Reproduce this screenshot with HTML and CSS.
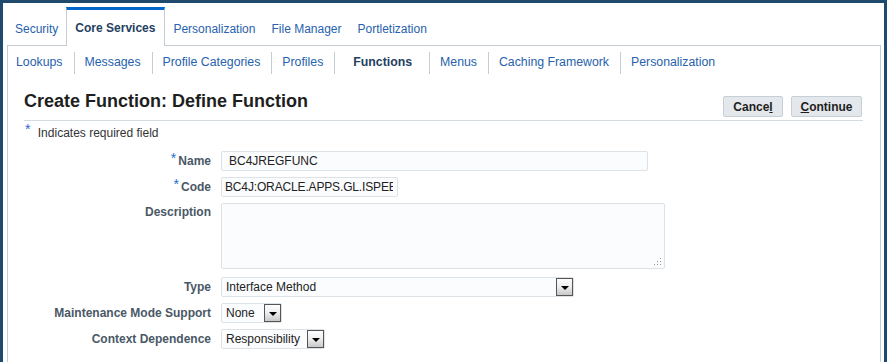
FILE: index.html
```html
<!DOCTYPE html>
<html lang="en">
<head>
  <meta charset="UTF-8" />
  <title>Create Function: Define Function</title>
  <link rel="stylesheet" href="styles.css">
</head>
<body>
  <div class="page">

    <nav class="tabs">
      <a class="tab" href="#">Security</a>
      <a class="tab active" href="#">Core Services</a>
      <a class="tab" href="#">Personalization</a>
      <a class="tab" href="#">File Manager</a>
      <a class="tab" href="#">Portletization</a>
    </nav>

    <div class="panel">
      <nav class="subtabs">
        <a class="subtab" href="#">Lookups</a>
        <a class="subtab" href="#">Messages</a>
        <a class="subtab" href="#">Profile Categories</a>
        <a class="subtab" href="#">Profiles</a>
        <a class="subtab current" href="#">Functions</a>
        <a class="subtab" href="#">Menus</a>
        <a class="subtab" href="#">Caching Framework</a>
        <a class="subtab" href="#">Personalization</a>
      </nav>

      <div class="content">
        <div class="title-row">
          <h1>Create Function: Define Function</h1>
          <div class="actions">
            <button class="btn cancel">Cance<u>l</u></button>
            <button class="btn continue"><u>C</u>ontinue</button>
          </div>
        </div>

        <p class="required-note"><span class="req">*</span> Indicates required field</p>

        <div class="form">
          <label class="label"><span class="req">*</span>Name</label>
          <div class="field"><input class="input name-input" type="text" value="BC4JREGFUNC"></div>

          <label class="label"><span class="req">*</span>Code</label>
          <div class="field"><input class="input code-input" type="text" value="BC4J:ORACLE.APPS.GL.ISPEED"></div>

          <label class="label top">Description</label>
          <div class="field"><div class="textarea"><span class="grip"></span></div></div>

          <label class="label gap-top">Type</label>
          <div class="field gap-top"><div class="select type-select"><span class="value">Interface Method</span><span class="drop"></span></div></div>

          <label class="label">Maintenance Mode Support</label>
          <div class="field"><div class="select mode-select"><span class="value">None</span><span class="drop"></span></div></div>

          <label class="label">Context Dependence</label>
          <div class="field"><div class="select context-select"><span class="value">Responsibility</span><span class="drop"></span></div></div>
        </div>
      </div>
    </div>

  </div>
</body>
</html>
```

FILE: styles.css
```css
* {
  margin: 0; padding: 0; box-sizing: border-box;
}
html, body {
  height: 100%;
  font-family: Arial, 'Liberation Sans', sans-serif;
  background: #1f4a6e;
}
body {
  padding: 3px 3px 0 3px;
}

.page {
  background: #fff;
  min-height: 100%;
  display: flex;
  flex-direction: column;
}

.tabs {
  display: flex;
  align-items: flex-end;
  height: 42px;
  padding-left: 4px;
  position: relative;
  z-index: 1;
}

.tab {
  font-size: 12px;
  color: #2762ad;
  text-decoration: none;
  padding: 0 8px;
  height: 38px;
  line-height: 37px;
  border-top: 3px solid transparent;
  margin-bottom: -1px;
}

.tab.active {
  font-weight: bold;
  color: #23405f;
  background: #fff;
  border-top: 3px solid #0066cc;
  border-left: 1px solid #c4ccd4;
  border-right: 1px solid #c4ccd4;
  padding: 0 9px 0 8px;
  height: 39px;
  line-height: 36px;
}

.panel {
  flex: 1;
  margin: 0 3px 0 4px;
  border: 1px solid #c4ccd4;
  border-bottom: none;
}

.subtabs {
  display: flex;
  padding: 6px 0 0 0;
  height: 28px;
}

.subtab {
  font-size: 12.3px;
  color: #2762ad;
  text-decoration: none;
  padding: 0 11px 0 10px;
  line-height: 20px;
  border-left: 1px solid #c4ccd4;
}
.subtab:first-child {
  border-left: none;
  padding-left: 8px;
}
.subtab.current {
  font-weight: bold;
  color: #23405f;
  padding-left: 18px;
  padding-right: 17px;
}

.content {
  padding: 16px 18px 0 16px;
}

.title-row {
  display: flex;
  justify-content: space-between;
  align-items: flex-end;
  border-bottom: 1px solid #d3dae0;
  padding-bottom: 3px;
  margin-right: -1px;
}

h1 {
  font-size: 18px;
  color: #1e1e1e;
  line-height: 22px;
  padding-bottom: 5px;
}

.actions {
  display: flex;
  gap: 8px;
  margin-right: 1px;
}

.btn {
  font-family: inherit;
  font-size: 12px;
  font-weight: bold;
  color: #1e1e1e;
  background: #e4e8ec;
  border: 1px solid #c6ced6;
  border-radius: 2px;
  height: 21px;
  padding: 0;
}
.btn.cancel {
  width: 60px;
}
.btn.continue {
  width: 71px;
}

.req {
  color: #1e6fcf;
  font-weight: normal;
  font-size: 14px;
  position: relative;
  top: -3px;
  margin-right: 2px;
}

.required-note {
  font-size: 12px;
  color: #333;
  padding: 3px 0 0 1px;
  line-height: 16px;
}
.required-note .req {
  margin-right: 4px;
}

.form {
  display: grid;
  grid-template-columns: 187px 1fr;
  column-gap: 10px;
  row-gap: 6px;
  margin-top: 10px;
}

.label {
  font-size: 12px;
  font-weight: bold;
  color: #4a5866;
  text-align: right;
  display: flex;
  align-items: center;
  justify-content: flex-end;
}
.label.top {
  align-items: flex-start;
  padding-top: 2px;
}

.field {
  display: flex;
}
.gap-top {
  margin-top: 2px;
}

.input {
  font-family: inherit;
  font-size: 12px;
  color: #222;
  height: 20px;
  background: #fbfcfd;
  border: 1px solid #dde2e6;
  border-radius: 2px;
  padding: 0 4px;
  outline: none;
}
.name-input {
  width: 427px;
  padding-left: 7px;
}
.code-input {
  width: 177px;
  padding-left: 3px;
  letter-spacing: -0.15px;
}

.textarea {
  width: 444px;
  height: 66px;
  background: #fbfcfd;
  border: 1px solid #dde2e6;
  border-radius: 2px;
  position: relative;
}
.grip {
  position: absolute;
  right: 3px;
  bottom: 3px;
  width: 8px;
  height: 8px;
  background:
    radial-gradient(circle, #999 0.8px, transparent 1px) 0 0 / 3px 3px;
  clip-path: polygon(100% 0, 100% 100%, 0 100%);
}

.select {
  display: flex;
  align-items: center;
  justify-content: space-between;
  height: 20px;
  background: #fbfcfd;
  border: 1px solid #dde2e6;
  border-radius: 2px;
  padding-left: 4px;
}
.type-select {
  width: 353px;
}
.mode-select {
  width: 61px;
}
.context-select {
  width: 104px;
}
.select .value {
  font-size: 12px;
  color: #222;
  padding-right: 4px;
}
.drop {
  width: 17px;
  height: 18px;
  border: 1px solid #555;
  background: linear-gradient(#fdfdfd, #f0f0f0 45%, #c8c8c8);
  position: relative;
  flex-shrink: 0;
}
.drop::after {
  content: "";
  position: absolute;
  left: 4px;
  top: 7px;
  border-left: 4px solid transparent;
  border-right: 4px solid transparent;
  border-top: 4px solid #000;
}
```
